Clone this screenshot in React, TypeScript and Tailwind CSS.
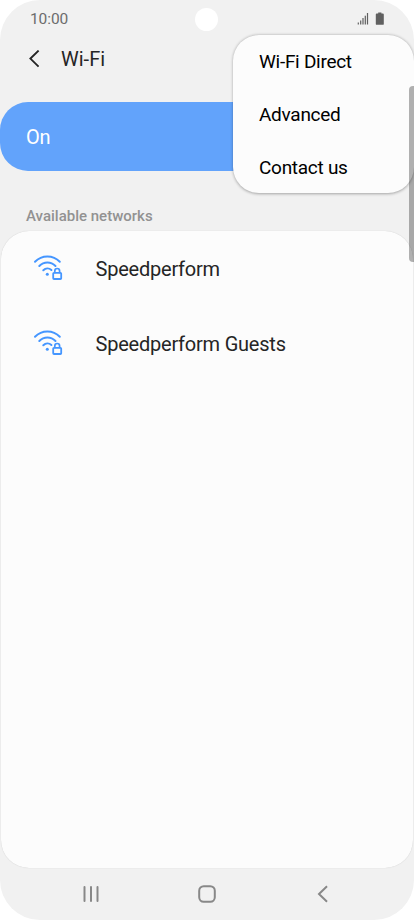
import React from "react";

const networks = ["Speedperform", "Speedperform Guests"];
const menuItems = ["Wi-Fi Direct", "Advanced", "Contact us"];

function SecuredWifiIcon() {
  return (
    <svg className="-mt-[2px]" width="32" height="28" viewBox="0 0 32 28" fill="none" stroke="#4596ff" strokeWidth="2" strokeLinecap="round">
      <path d="M3 7.7C9.800.6 21 .6 27.800 7.700" />
      <path d="M7.300 12c4.600-4.700 11.600-4.700 16.200 0" />
      <path d="M11.300 16.200c2.400-2.200 5.800-2.200 8.100-.2" />
      <circle cx="15.300" cy="20.300" r="1.500" fill="#4596ff" stroke="none" />
      <rect x="21.200" y="18.800" width="8" height="6.200" rx=".8" strokeWidth="1.800" />
      <path d="M22.800 18.500v-1.600a2.400 2.400 0 0 1 4.800 0v1.600" strokeWidth="1.700" />
    </svg>
  );
}

function StatusIcons() {
  return (
    <svg width="28" height="14" viewBox="0 0 28 14" fill="#606060">
      <rect x="0.7" y="10.5" width="1.2" height="2" />
      <rect x="3.1" y="8.5" width="1.2" height="4" />
      <rect x="5.4" y="6" width="1.2" height="6.5" />
      <rect x="7.7" y="3.7" width="1.2" height="8.8" />
      <rect x="9.9" y="1" width="1.2" height="11.5" />
      <path d="M21.2.4h3.2v1.2h1.5q.9 0 .9.9v9.4q0 .9-.9.9h-6.200q-.9 0-.9-.9V2.500q0-.9.9-.9h1.500z" />
    </svg>
  );
}

export default function App() {
  return (
    <div className="h-[920px] w-[414px] overflow-hidden bg-white font-[Roboto,'Liberation_Sans',sans-serif]">
      <div className="relative flex h-full flex-col overflow-hidden rounded-[40px] bg-[#f1f1f1]">
        <div className="grid h-[38px] shrink-0 grid-cols-3 items-center pl-[29px] pr-[29px]">
          <span className="pl-[1px] text-[15.5px] leading-5 tracking-[-0.1px] text-[#6c6c6c]">10:00</span>
          <span className="size-[23px] justify-self-center rounded-full bg-white" />
          <span className="justify-self-end">
            <StatusIcons />
          </span>
        </div>

        <header className="flex h-[42px] shrink-0 items-center pl-[28px]">
          <svg width="13" height="18" viewBox="0 0 13 18" fill="none" stroke="#252525" strokeWidth="1.9">
            <path d="M10.600 .6 2.400 8.600l8.200 8" />
          </svg>
          <h1 className="ml-[20px] text-[20px] leading-6 text-[#252525]">Wi-Fi</h1>
        </header>

        <div className="mt-[21.5px] flex h-[69px] shrink-0 items-center rounded-[28px] bg-[#62a3fb] pl-[26px] pt-[2px] text-[20px] tracking-[-0.3px] text-white">
          On
        </div>

        <h2 className="mt-[35px] shrink-0 pl-[26px] text-[15px] font-medium leading-5 text-[#929292]">
          Available networks
        </h2>

        <main className="mx-px mt-[5.5px] flex h-[637px] shrink-0 flex-col rounded-[28px] bg-[#fcfcfc] shadow-[0_0_1px_rgba(0,0,0,0.2)]">
          {networks.map((name) => (
            <div key={name} className="flex h-[75.600px] items-center pl-[31px]">
              <SecuredWifiIcon />
              <span className="ml-[31.500px] text-[20px] leading-6 tracking-[-0.220px] text-[#252525]">{name}</span>
            </div>
          ))}
        </main>

        <nav className="flex flex-1 items-center justify-between pl-[82px] pr-[84px]">
          <svg width="18" height="18" viewBox="0 0 18 18" stroke="#888888" strokeWidth="2" strokeLinecap="round">
            <path d="M2.500 2v14M9 2v14M15.500 2v14" />
          </svg>
          <svg className="-ml-[2px]" width="18" height="18" viewBox="0 0 18 18" fill="none" stroke="#888888" strokeWidth="2">
            <rect x="1.200" y="1.200" width="15.600" height="15.600" rx="4.500" />
          </svg>
          <svg width="14" height="18" viewBox="0 0 14 18" fill="none" stroke="#888888" strokeWidth="2">
            <path d="M11 1.200 3 9l8 7.800" />
          </svg>
        </nav>

        <div className="absolute right-0 top-[35px] flex h-[158px] w-[181px] flex-col rounded-[26px] bg-[#fcfcfc] pt-[0.5px] text-[19px] tracking-[-0.280px] text-black shadow-[0_0.5px_3px_rgba(0,0,0,0.32)]">
          {menuItems.map((item) => (
            <div key={item} className="flex h-[53.200px] shrink-0 items-center pl-[26px]">
              {item}
            </div>
          ))}
        </div>

        <div className="absolute right-0 top-[86px] h-[176px] w-[5px] rounded-l-[4px] bg-black/30" />
      </div>
    </div>
  );
}
